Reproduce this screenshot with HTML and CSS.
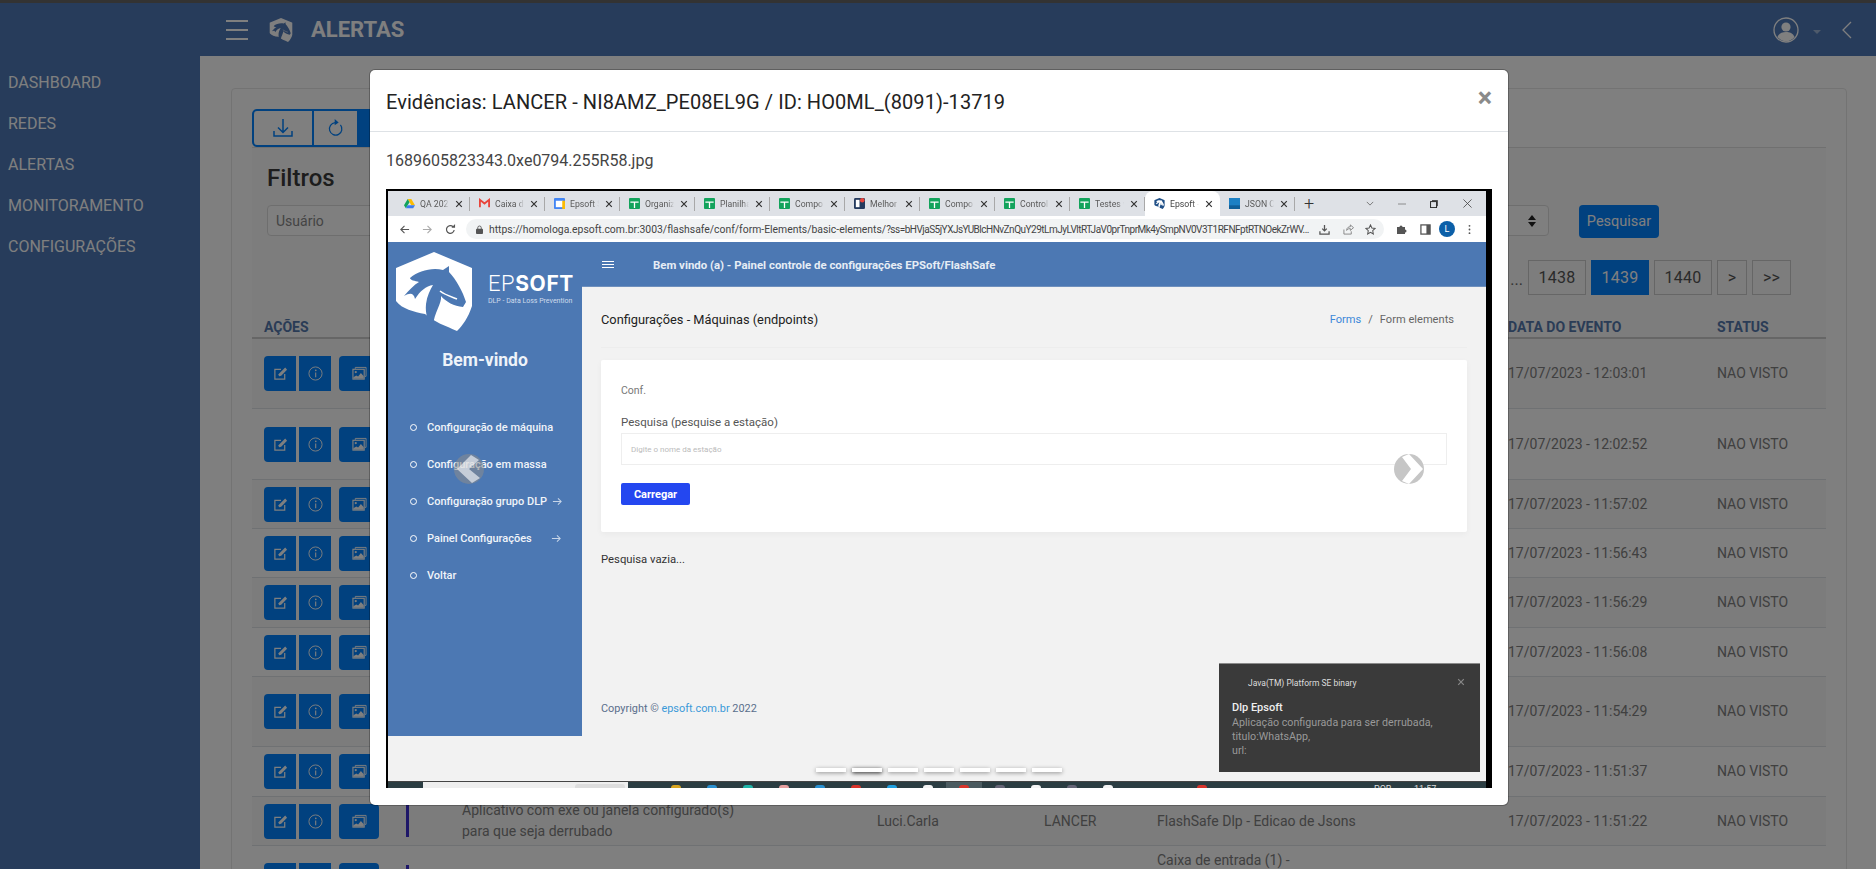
FILE: index.html
```html
<!DOCTYPE html>
<html lang="pt-BR">
<head>
<meta charset="utf-8">
<title>Alertas</title>
<link rel="stylesheet" href="styles.css">
</head>
<body>
<svg class="defs" aria-hidden="true">
  <symbol id="i-edit" viewBox="0 0 16 16"><path d="M12.5 8.5V14H2V3.5h6.5" fill="none" stroke="currentColor" stroke-width="1.3"/><path d="M5.5 9l1.2 2 2-.6L15 4 13 1.5z" fill="currentColor"/></symbol>
  <symbol id="i-info" viewBox="0 0 16 16"><circle cx="8" cy="8" r="7" fill="none" stroke="currentColor" stroke-width="1"/><circle cx="8.3" cy="4.6" r=".9" fill="currentColor"/><path d="M8.2 7v5" stroke="currentColor" stroke-width="1.2" fill="none"/></symbol>
  <symbol id="i-img" viewBox="0 0 16 16"><path d="M3.5 3V1.5H15V11h-1.2" fill="none" stroke="currentColor" stroke-width="1"/><rect x="1" y="3.5" width="12" height="10.5" fill="none" stroke="currentColor" stroke-width="1.2"/><circle cx="4" cy="6.5" r="1.2" fill="currentColor"/><path d="M1.5 13.5V12l3-2 2 1.2L9.5 7.5l3 3.5v2.5z" fill="currentColor"/></symbol>
  <symbol id="i-sheet" viewBox="0 0 12 12"><rect width="12" height="12" rx="1" fill="#12a35c"/><path d="M1.5 4.5h9M6 4.5V11" stroke="#fff" stroke-width="1.4" fill="none"/></symbol>
  <symbol id="i-close" viewBox="0 0 10 10"><path d="M1.5 1.5l7 7M8.5 1.5l-7 7" stroke="currentColor" stroke-width="1.5" fill="none"/></symbol>
  <symbol id="i-horse" viewBox="0 0 76 79">
    <path d="M38 0L76 16V54C72 66 67 73 61 79C50 74 38 70 29 62C18 60 6 57 0 49V16Z" fill="currentColor"/>
    <path d="M14 26C22 19 36 15 47 18L53 14L53 20C60 27 67 40 70 50L67 55C58 54 50 50 45 44C46 52 38 60 37 74C32 71 29 62 30 52C31 44 34 38 37 33C30 34 24 39 19 47C18 42 15 40 8 44C13 38 18 33 23 30C19 29 14 28 14 26Z" fill="var(--horse-fill)"/>
    <path d="M44 39C49 43 56 45 61 47" fill="none" stroke="currentColor" stroke-width="1.6"/>
  </symbol>
  <symbol id="i-arrow" viewBox="0 0 12 12"><path d="M1 6h9M6.5 2.5L10 6 6.5 9.5" fill="none" stroke="currentColor" stroke-width="1.1"/></symbol>
</svg>

<div class="strip"></div>
<header class="topbar">
  <span class="burger"><i></i><i></i><i></i></span>
  <svg class="brand" viewBox="0 0 76 79"><use href="#i-horse"/></svg>
  <h1 class="page-title">ALERTAS</h1>
  <div class="top-right">
    <svg class="user" viewBox="0 0 26 26"><circle cx="13" cy="13" r="12" fill="none" stroke="currentColor" stroke-width="1.3"/><circle cx="13" cy="10" r="4.6" fill="currentColor"/><path d="M4.5 20c1.5-4 5-5 8.500-5s7 1 8.500 5c-2 2.500-5 4.300-8.500 4.300S6.500 22.500 4.500 20z" fill="currentColor"/></svg>
    <span class="caret"></span>
    <svg class="back" viewBox="0 0 10 18"><path d="M9 1L1 9l8 8" fill="none" stroke="currentColor" stroke-width="1.300"/></svg>
  </div>
</header>

<div class="layout">
  <nav class="side">
    <a>DASHBOARD</a><a>REDES</a><a>ALERTAS</a><a>MONITORAMENTO</a><a>CONFIGURAÇÕES</a>
  </nav>
  <main class="content">
    <section class="card">
      <div class="tools">
        <button class="tool t-down"><svg viewBox="0 0 22 22"><path d="M11 2v13M6 10.500l5 5 5-5M2 14v5h18v-5" fill="none" stroke="currentColor" stroke-width="1.500"/></svg></button>
        <button class="tool t-ref"><svg viewBox="0 0 18 22"><path d="M8 5A7 7 0 1 0 14 7.500" fill="none" stroke="currentColor" stroke-width="1.400"/><path d="M7.500 1l4.500 3.800-4.500 3.200z" fill="currentColor"/></svg></button>
        <button class="tool t-fill"></button>
      </div>
      <div class="panel">
        <h2 class="filters-title">Filtros</h2>
        <div class="filter-row">
          <div class="fields"><span class="ph">Usuário</span><span class="updown"><i></i><i></i></span></div>
          <button class="search">Pesquisar</button>
        </div>
        <div class="pager">
          <span class="dots">...</span>
          <a class="pg w58">1438</a><a class="pg w58 on">1439</a><a class="pg w58">1440</a><a class="pg w30">&gt;</a><a class="pg w39">&gt;&gt;</a>
        </div>
      </div>
      <div class="grid head">
        <div class="cell-first">AÇÕES</div><div></div><div></div><div></div><div></div><div></div><div>DATA DO EVENTO</div><div>STATUS</div>
      </div>

      <div class="grid row h70">
        <div class="acts"><button class="a a-l"><svg><use href="#i-edit"/></svg></button><button class="a"><svg><use href="#i-info"/></svg></button><button class="a a-p"><svg><use href="#i-img"/></svg></button></div><div></div><div></div><div></div><div></div><div></div><div>17/07/2023 - 12:03:01</div><div>NAO VISTO</div>
      </div>
      <div class="grid row h71">
        <div class="acts"><button class="a a-l"><svg><use href="#i-edit"/></svg></button><button class="a"><svg><use href="#i-info"/></svg></button><button class="a a-p"><svg><use href="#i-img"/></svg></button></div><div></div><div></div><div></div><div></div><div></div><div>17/07/2023 - 12:02:52</div><div>NAO VISTO</div>
      </div>
      <div class="grid row h49">
        <div class="acts"><button class="a a-l"><svg><use href="#i-edit"/></svg></button><button class="a"><svg><use href="#i-info"/></svg></button><button class="a a-p"><svg><use href="#i-img"/></svg></button></div><div></div><div></div><div></div><div></div><div></div><div>17/07/2023 - 11:57:02</div><div>NAO VISTO</div>
      </div>
      <div class="grid row h49">
        <div class="acts"><button class="a a-l"><svg><use href="#i-edit"/></svg></button><button class="a"><svg><use href="#i-info"/></svg></button><button class="a a-p"><svg><use href="#i-img"/></svg></button></div><div></div><div></div><div></div><div></div><div></div><div>17/07/2023 - 11:56:43</div><div>NAO VISTO</div>
      </div>
      <div class="grid row h50">
        <div class="acts"><button class="a a-l"><svg><use href="#i-edit"/></svg></button><button class="a"><svg><use href="#i-info"/></svg></button><button class="a a-p"><svg><use href="#i-img"/></svg></button></div><div></div><div></div><div></div><div></div><div></div><div>17/07/2023 - 11:56:29</div><div>NAO VISTO</div>
      </div>
      <div class="grid row h49">
        <div class="acts"><button class="a a-l"><svg><use href="#i-edit"/></svg></button><button class="a"><svg><use href="#i-info"/></svg></button><button class="a a-p"><svg><use href="#i-img"/></svg></button></div><div></div><div></div><div></div><div></div><div></div><div>17/07/2023 - 11:56:08</div><div>NAO VISTO</div>
      </div>
      <div class="grid row h70">
        <div class="acts"><button class="a a-l"><svg><use href="#i-edit"/></svg></button><button class="a"><svg><use href="#i-info"/></svg></button><button class="a a-p"><svg><use href="#i-img"/></svg></button></div><div></div><div></div><div></div><div></div><div></div><div>17/07/2023 - 11:54:29</div><div>NAO VISTO</div>
      </div>
      <div class="grid row h50">
        <div class="acts"><button class="a a-l"><svg><use href="#i-edit"/></svg></button><button class="a"><svg><use href="#i-info"/></svg></button><button class="a a-p"><svg><use href="#i-img"/></svg></button></div><div></div><div></div><div></div><div></div><div></div><div>17/07/2023 - 11:51:37</div><div>NAO VISTO</div>
      </div>
      <div class="grid row h49">
        <div class="acts"><button class="a a-l"><svg><use href="#i-edit"/></svg></button><button class="a"><svg><use href="#i-info"/></svg></button><button class="a a-p"><svg><use href="#i-img"/></svg></button></div><div><span class="bar"></span></div><div class="msg">Aplicativo com exe ou janela configurado(s)<br>para que seja derrubado</div><div>Luci.Carla</div><div>LANCER</div><div>FlashSafe Dlp - Edicao de Jsons</div><div>17/07/2023 - 11:51:22</div><div>NAO VISTO</div>
      </div>
      <div class="grid row h70">
        <div class="acts"><button class="a a-l"><svg><use href="#i-edit"/></svg></button><button class="a"><svg><use href="#i-info"/></svg></button><button class="a a-p"><svg><use href="#i-img"/></svg></button></div><div><span class="bar"></span></div><div></div><div></div><div></div><div class="msg-top">Caixa de entrada (1) -</div><div></div><div></div>
      </div>
    </section>
  </main>
</div>

<div class="backdrop"></div>

<div class="modal">
  <div class="modal-head">
    <h3 class="modal-title">Evidências: LANCER - NI8AMZ_PE08EL9G / ID: HO0ML_(8091)-13719</h3>
    <span class="modal-x">×</span>
  </div>
  <div class="modal-body">
    <p class="filename">1689605823343.0xe0794.255R58.jpg</p>
    <div class="frame">
      <div class="shot">
        <div class="tabs">
          <div class="tab"><svg class="fav" viewBox="0 0 12 12"><path d="M4 1h4l4 7H8z" fill="#fbbc04"/><path d="M4 1L0 8l2 3.300L6 4.500z" fill="#12a35c"/><path d="M2 11.300h8L12 8H4z" fill="#3b7df0"/></svg><span class="tt">QA 2023</span><svg class="tx"><use href="#i-close"/></svg></div>
          <div class="tab"><svg class="fav" viewBox="0 0 12 12"><path d="M1 10V2l5 4 5-4v8" fill="none" stroke="#e8453c" stroke-width="2"/></svg><span class="tt">Caixa de</span><svg class="tx"><use href="#i-close"/></svg></div>
          <div class="tab"><svg class="fav" viewBox="0 0 12 12"><rect width="12" height="12" rx="1" fill="#4285f4"/><rect x="2" y="3" width="8" height="7" fill="#fff"/><rect x="9" y="3" width="3" height="9" fill="#fbbc04"/></svg><span class="tt">Epsoft S</span><svg class="tx"><use href="#i-close"/></svg></div>
          <div class="tab"><svg class="fav"><use href="#i-sheet"/></svg><span class="tt">Organiz</span><svg class="tx"><use href="#i-close"/></svg></div>
          <div class="tab"><svg class="fav"><use href="#i-sheet"/></svg><span class="tt">Planilha</span><svg class="tx"><use href="#i-close"/></svg></div>
          <div class="tab"><svg class="fav"><use href="#i-sheet"/></svg><span class="tt">Compo</span><svg class="tx"><use href="#i-close"/></svg></div>
          <div class="tab"><svg class="fav" viewBox="0 0 12 12"><rect width="12" height="12" rx="1.500" fill="#243a5e"/><rect x="2" y="2" width="4" height="8" fill="#fff"/><circle cx="9" cy="2.500" r="2.500" fill="#e8453c"/></svg><span class="tt">Melhor</span><svg class="tx"><use href="#i-close"/></svg></div>
          <div class="tab"><svg class="fav"><use href="#i-sheet"/></svg><span class="tt">Compo</span><svg class="tx"><use href="#i-close"/></svg></div>
          <div class="tab"><svg class="fav"><use href="#i-sheet"/></svg><span class="tt">Control</span><svg class="tx"><use href="#i-close"/></svg></div>
          <div class="tab"><svg class="fav"><use href="#i-sheet"/></svg><span class="tt">Testes v</span><svg class="tx"><use href="#i-close"/></svg></div>
          <div class="tab active"><svg class="fav horse-fav" viewBox="0 0 76 79"><use href="#i-horse"/></svg><span class="tt">Epsoft -</span><svg class="tx"><use href="#i-close"/></svg></div>
          <div class="tab"><svg class="fav" viewBox="0 0 12 12"><rect width="12" height="12" fill="#1c80c4"/><rect y="8" width="12" height="4" fill="#0f5f99"/></svg><span class="tt">JSON C</span><svg class="tx"><use href="#i-close"/></svg></div>
          <span class="plus">+</span>
          <div class="win">
            <svg class="w-chev" viewBox="0 0 10 6"><path d="M1 1l4 4 4-4" fill="none" stroke="#555" stroke-width=".9"/></svg>
            <svg class="w-min" viewBox="0 0 10 10"><path d="M0 5h10" stroke="#777" stroke-width="1"/></svg>
            <svg class="w-max" viewBox="0 0 10 10"><rect x=".7" y="2" width="7.500" height="7.500" fill="none" stroke="#222" stroke-width="1.200"/><path d="M2.500 .7h7v7" fill="none" stroke="#222" stroke-width="1"/></svg>
            <svg class="w-cls" viewBox="0 0 10 10"><path d="M.5 .5l9 9M9.500 .5l-9 9" stroke="#444" stroke-width=".9"/></svg>
          </div>
        </div>
        <div class="addr">
          <svg class="nav-i n-back" viewBox="0 0 12 12"><path d="M11 6H2M6 2L2 6l4 4" fill="none" stroke="#555" stroke-width="1.200"/></svg>
          <svg class="nav-i n-fwd" viewBox="0 0 12 12"><path d="M1 6h9M6 2l4 4-4 4" fill="none" stroke="#aaa" stroke-width="1.200"/></svg>
          <svg class="nav-i n-rel" viewBox="0 0 12 12"><path d="M10 6.500A4.200 4.200 0 1 1 8.800 3" fill="none" stroke="#555" stroke-width="1.300"/><path d="M7 4h4V0z" fill="#555"/></svg>
          <div class="omni">
            <svg class="lock" viewBox="0 0 8 10"><path d="M2 4.500V3a2 2 0 0 1 4 0v1.500" fill="none" stroke="#555"/><rect y="4" width="8" height="6" rx="1" fill="#555"/></svg>
            <span class="url">https://homologa.epsoft.com.br:3003/flashsafe/conf/form-Elements/basic-elements/<span class="url-q">?ss=bHVjaS5jYXJsYUBlcHNvZnQuY29tLmJyLVltRTJaV0prTnprMk4ySmpNV0V3T1RFNFptRTNOekZrWV...</span></span>
            <svg class="o-i o-down" viewBox="0 0 12 12"><path d="M6 1v6M3.500 5L6 7.500 8.500 5" fill="none" stroke="#555" stroke-width="1.400"/><path d="M1 8v3h10V8" fill="none" stroke="#555" stroke-width="1.400"/></svg>
            <svg class="o-i o-share" viewBox="0 0 12 12"><path d="M1 6v5h8V8M4 7c0-3 2-4 4-4V1l3.500 3L8 7V5C6 5 5 5.500 4 7z" fill="none" stroke="#777" stroke-width=".9"/></svg>
            <svg class="o-i o-star" viewBox="0 0 12 12"><path d="M6 1l1.500 3.400 3.500.4-2.600 2.400.7 3.600L6 9l-3.100 1.800.7-3.600L1 4.800l3.500-.4z" fill="none" stroke="#555" stroke-width="1.100"/></svg>
          </div>
          <svg class="o-i t-puzzle" viewBox="0 0 12 12"><path d="M1 4h2.500a1.500 1.500 0 0 1 3 0H9v2.500a1.500 1.500 0 0 1 0 3V11H1z" fill="#555"/></svg>
          <svg class="o-i t-panel" viewBox="0 0 12 12"><rect x="1" y="1" width="10" height="10" fill="none" stroke="#555" stroke-width="1.400"/><rect x="7" y="1" width="4" height="10" fill="#555"/></svg>
          <span class="avatar">L</span>
          <svg class="t-more" viewBox="0 0 3 12"><circle cx="1.500" cy="2" r="1" fill="#555"/><circle cx="1.500" cy="6" r="1" fill="#555"/><circle cx="1.500" cy="10" r="1" fill="#555"/></svg>
        </div>
        <div class="site">
          <aside class="site-side">
            <div class="site-logo">
              <svg class="shield" viewBox="0 0 76 79"><use href="#i-horse"/></svg>
              <div class="wordmark"><div class="ep">EP<b>SOFT</b></div><div class="tag">DLP - Data Loss Prevention</div></div>
            </div>
            <div class="welcome">Bem-vindo</div>
            <ul class="site-menu">
              <li><i></i>Configuração de máquina</li>
              <li><i></i>Configuração em massa</li>
              <li><i></i>Configuração grupo DLP<svg class="m-arr g1"><use href="#i-arrow"/></svg></li>
              <li><i></i>Painel Configurações<svg class="m-arr g2"><use href="#i-arrow"/></svg></li>
              <li><i></i>Voltar</li>
            </ul>
          </aside>
          <div class="site-main">
            <div class="site-nav">
              <span class="site-burger"><i></i><i></i><i></i></span>
              <span class="site-navtitle">Bem vindo (a) - Painel controle de configurações EPSoft/FlashSafe</span>
            </div>
            <div class="site-page">
              <div class="crumbs-row">
                <span class="page-h">Configurações - Máquinas (endpoints)</span>
                <span class="crumbs"><a>Forms</a><em>/</em>Form elements</span>
              </div>
              <div class="conf-card">
                <div class="conf-t">Conf.</div>
                <label class="conf-l">Pesquisa (pesquise a estação)</label>
                <div class="conf-i">Digite o nome da estação</div>
                <button class="conf-b">Carregar</button>
              </div>
              <div class="empty">Pesquisa vazia...</div>
              <div class="copy">Copyright © <a>epsoft.com.br</a> 2022</div>
            </div>
          </div>
        </div>
        <div class="taskbar">
          <span class="tb-search"><span class="tb-pill"></span></span>
          <div class="tb-icons">
            <span class="ti"><i class="c1"></i></span><span class="ti"><i class="c2"></i></span><span class="ti"><i class="c3"></i></span><span class="ti"><i class="c4"></i></span><span class="ti"><i class="c2"></i></span><span class="ti"><i class="c5"></i></span><span class="ti"><i class="c6"></i></span><span class="ti"><i class="c7"></i></span><span class="ti hi"><i class="c5"></i></span><span class="ti"><i class="c8"></i></span><span class="ti"><i class="c7"></i></span><span class="ti"><i class="c8"></i></span><span class="ti"><i class="c7"></i></span>
          </div>
          <i class="tb-red"></i>
          <span class="tb-txt t-por">POR</span><span class="tb-txt t-time">11:57</span>
        </div>

        <svg class="ctrl c-prev" viewBox="0 0 30 30"><circle cx="15" cy="15" r="15" fill="#8c8c8c" fill-opacity=".55"/><path d="M3 15L17 1l8 5-10 9 11 9-8 5z" fill="#fff" fill-opacity=".6"/></svg>
        <svg class="ctrl c-next" viewBox="0 0 30 30"><circle cx="15" cy="15" r="15" fill="#c6c6c6"/><path d="M8 3l7-3 14 15-14 15-7-3 9-12z" fill="#fff"/></svg>
        <div class="dotsbar"><i></i><i class="on"></i><i></i><i></i><i></i><i></i><i></i></div>
        <div class="toast">
          <div class="toast-top">Java(TM) Platform SE binary<svg class="toast-x"><use href="#i-close"/></svg></div>
          <div class="toast-h">Dlp Epsoft</div>
          <div class="toast-b">Aplicação configurada para ser derrubada,<br>titulo:WhatsApp,<br>url:</div>
        </div>
      </div>
    </div>
  </div>
</div>
</body>
</html>
```
FILE: styles.css
```css
*{box-sizing:border-box}
html,body{margin:0;height:869px;overflow:hidden}
body{font-family:Roboto,"Liberation Sans",sans-serif;background:#fff;color:#808080;position:relative;--horse-fill:#4e78b6}
.defs{position:absolute;width:0;height:0}
button{font-family:inherit;border:0;padding:0}
h1,h2,h3,p,ul{margin:0;padding:0}
.strip{height:3px;background:#666}
.topbar{height:53px;background:#4e78b6;display:flex;align-items:center;padding-left:226px;color:#fff}
.burger{width:22px;display:flex;flex-direction:column;gap:7px}
.burger i{display:block;height:2px;background:#fff}
.brand{width:24px;height:24px;margin-left:21px;color:#fff;--horse-fill:#4e78b6}
.page-title{font-size:22px;font-weight:700;margin-left:18px;line-height:1}
.top-right{margin-left:auto;display:flex;align-items:center;padding-right:24px}
.user{width:26px;height:26px}
.caret{margin-left:14px;margin-top:4px;border:4px solid transparent;border-top:4px solid rgba(255,255,255,.45);border-bottom-width:0}
.back{width:10px;height:18px;margin-left:21px}
.layout{display:flex;height:813px}
.side{width:200px;background:#4e78b6;padding-top:6px;flex:none}
.side a{display:block;height:41px;line-height:41px;padding-left:8px;color:#fff;font-size:16px}
.content{flex:1;padding:32px 29px 0 31px;overflow:hidden}
.card{border:1px solid #e6e6e6;border-radius:4px;padding:20px 20px 0;height:900px}
.tools{display:flex;height:38px}
.tool{height:38px;background:#fff;border:2px solid #0282fe;color:#0282fe;display:flex;align-items:center;justify-content:center}
.t-down{width:62px;border-radius:5px 0 0 5px}
.t-ref{width:45px;border-left:0}
.t-fill{flex:0 0 60px;background:#0282fe}
.t-down svg{width:22px;height:22px}
.t-ref svg{width:16px;height:20px}
.panel{border-top:1px solid #e0e0e0;background:#fafafa;height:169px;padding:9px 35px 0 15px}
.filters-title{font-size:24px;font-weight:500;line-height:42px;color:#3a3a3a;height:42px}
.filter-row{display:flex;margin-top:6px;height:33px;padding-right:132px}
.fields{flex:1;height:31px;border:1px solid #ddd;border-radius:4px;margin-right:30px;background:#fff;display:flex;align-items:center;justify-content:space-between;padding:0 12px 0 8px}
.ph{font-size:14px;color:#888}
.updown{display:flex;flex-direction:column;gap:2px}
.updown i{display:block;border:4px solid transparent}
.updown i:first-child{border-bottom:5px solid #222;border-top-width:0}
.updown i:last-child{border-top:5px solid #222;border-bottom-width:0}
.search{width:80px;height:33px;border-radius:4px;background:#0282fe;color:#fff;font-size:14.500px}
.pager{display:flex;justify-content:flex-end;gap:5px;margin-top:22px;height:35px;align-items:stretch}
.dots{font-size:16px;color:#666;align-self:center;padding-top:4px}
.pg{border:1px solid #ccc;display:flex;align-items:center;justify-content:center;color:#555;font-size:16px;letter-spacing:.2px}
.w58{width:58px}.w30{width:30px}.w39{width:39px}
.pg.on{background:#0282fe;color:#fff;border-color:#0282fe}
.grid{display:grid;grid-template-columns:155px 55px 415px 167px 113px 351px 209px 109px;align-items:center;font-size:14px;color:#808080}
.head{height:23px;border-bottom:2px solid #ccc;font-weight:700;color:#5578ad;font-size:14px;background:#fafafa}
.cell-first{padding-left:12px}
.row{border-bottom:1px solid #dee2e6;line-height:21px}
.row:nth-of-type(even){background:#f8f8f8}
.h49{height:49px}.h50{height:50px}.h70{height:70px}.h71{height:71px}
.acts{display:flex;padding-left:12px}
.a{width:32px;height:35px;background:#0282fe;color:#fff;display:flex;align-items:center;justify-content:center;margin-right:3px}
.a svg{width:15px;height:15px}
.a-l{border-radius:4px 0 0 4px}
.a-p{width:40px;border-radius:4px;margin-left:5px}
.bar{display:block;width:3px;height:32px;background:#3d2fd0;margin-left:-1px}
.msg{color:#808080}
.msg-top{align-self:start;margin-top:4px}

.backdrop{position:absolute;inset:0;background:rgba(0,0,0,.5)}
.modal{position:absolute;left:370px;top:70px;width:1138px;height:735px;background:#fff;border-radius:5px;color:#212529;box-shadow:0 0 0 1px rgba(0,0,0,.25)}
.modal-head{height:62px;border-bottom:1px solid #dee2e6;display:flex;align-items:center;justify-content:space-between;padding:2px 16px 0 16px}
.modal-title{font-size:20px;font-weight:400;letter-spacing:.07px;color:#222}
.modal-x{font-size:27px;font-weight:700;color:#8a8a8a;line-height:1;margin-top:-6px}
.modal-body{padding:0 16px 17px}
.filename{font-size:16px;line-height:20px;padding:19px 0 0;color:#444;height:57px}
.frame{height:599px;background:#000;padding:2px 6px 0 2px;overflow:hidden}
.shot{position:relative;height:597px;display:flex;flex-direction:column;overflow:hidden;background:#f2f2f2;font-size:11px;color:#333}

.tabs{height:25px;background:#dee1e6;display:flex;align-items:center;padding-left:7px;flex:none}
.tab{width:75px;height:25px;display:flex;align-items:center;padding-left:9px;position:relative;font-size:8.700px;color:#5a5a5a}
.tab::after{content:"";position:absolute;right:0;top:6px;height:14px;width:1px;background:#a8a8a8}
.tab.active{background:#fff;border-radius:8px 8px 0 0;color:#444}
.tab.active::after{display:none}
.fav{width:11px;height:11px;flex:none}
.horse-fav{color:#1f4f86;--horse-fill:#fff}
.tt{width:29px;margin-left:5px;white-space:nowrap;overflow:hidden;-webkit-mask-image:linear-gradient(90deg,#000 78%,transparent);mask-image:linear-gradient(90deg,#000 78%,transparent)}
.tx{width:8px;height:8px;margin-left:6px;color:#333;flex:none}
.plus{font-size:18px;color:#333;margin-left:9px;line-height:1;font-weight:300}
.win{margin-left:auto;display:flex;align-items:center;height:25px;padding-right:14px}
.w-chev{width:8px;height:5px;margin-right:24px}
.w-min{width:8px;height:8px;margin-right:24px}
.w-max{width:8px;height:8px;margin-right:25px}
.w-cls{width:9px;height:9px}
.addr{height:26px;background:#fff;display:flex;align-items:center;padding-left:11px;flex:none}
.nav-i{width:11px;height:11px;margin-right:12px;flex:none}
.n-rel{margin-right:10px}
.omni{width:918px;height:20px;border-radius:10px;background:#f1f3f4;display:flex;align-items:center;padding-left:10px;flex:none}
.lock{width:7px;height:9px;flex:none}
.url{font-size:10.400px;color:#444;margin-left:6px;width:822px;white-space:nowrap;overflow:hidden;flex:none}
.url-q{font-size:10px;letter-spacing:-.5px}
.o-i{width:11px;height:11px;flex:none}
.o-down{margin-left:8px}
.o-share{margin-left:13px}
.o-star{margin-left:11px}
.t-puzzle{margin-left:12px;width:12px;height:12px}
.t-panel{margin-left:12px}
.avatar{width:16px;height:16px;border-radius:50%;background:#0b5fa8;color:#fff;font-size:9px;display:flex;align-items:center;justify-content:center;margin-left:8px;flex:none}
.t-more{width:3px;height:11px;margin-left:13px;flex:none}

.site{height:539px;display:flex;flex:none}
.site-side{width:194px;height:494px;background:#4c78b3;color:#fff;flex:none;--horse-fill:#4c78b3}
.site-logo{display:flex;padding:10px 0 0 8px;height:90px}
.shield{width:76px;height:79px;color:#fff;flex:none}
.wordmark{margin-left:16px;padding-top:21px}
.ep{font-size:22px;line-height:22px;font-weight:300;letter-spacing:.6px;white-space:nowrap}
.ep b{font-weight:700;font-family:Inter,Roboto,sans-serif;font-size:21px;letter-spacing:.6px}
.tag{font-size:7px;color:#cfdcec;margin-top:2px;white-space:nowrap}
.welcome{font-size:17.500px;font-weight:700;text-align:center;line-height:24px;margin-top:16px;color:#eef3f9}
.site-menu{list-style:none;margin-top:37px;padding-left:22px;font-size:11px;font-weight:500;color:#f0f4f9}
.site-menu li{height:37.100px;display:flex;align-items:center;white-space:nowrap;line-height:1}
.site-menu li i{width:7px;height:7px;border:1.500px solid #fff;border-radius:50%;margin-right:10px;flex:none}
.m-arr{width:11px;height:11px;color:#c7d5e8;flex:none}
.g1{margin-left:5px}
.g2{margin-left:19px}
.site-main{flex:1;display:flex;flex-direction:column;min-width:0}
.site-nav{height:45px;background:#4c78b3;display:flex;align-items:center;color:#fff;padding:1px 0 0 20px;flex:none;border-bottom:1px solid #6f90bd}
.site-burger{width:12px;display:flex;flex-direction:column;gap:2px}
.site-burger i{display:block;height:1.200px;background:#fff}
.site-navtitle{font-size:11.400px;font-weight:700;margin-left:39px;color:#e6edf5}
.site-page{flex:1;padding:0 19px}
.crumbs-row{height:61px;display:flex;justify-content:space-between;align-items:center;border-bottom:1px solid #ededed;padding:5px 13px 0 0;margin-bottom:12px}
.page-h{font-size:12.800px;color:#222}
.crumbs{font-size:11.100px;color:#666}
.crumbs a{color:#3b88d9}
.crumbs em{font-style:normal;margin:0 7px}
.conf-card{height:172px;background:#fff;border-radius:2px;padding:24px 20px;box-shadow:0 2px 6px rgba(0,0,0,.04)}
.conf-t{font-size:10.500px;color:#777;line-height:14px}
.conf-l{display:block;font-size:11.500px;color:#555;margin-top:17px;line-height:14px}
.conf-i{height:32px;border:1px solid #eee;margin-top:4px;font-size:8px;color:#bbb;display:flex;align-items:center;padding-left:9px}
.conf-b{display:block;width:69px;height:22px;background:#2447f0;color:#fff;font-size:11px;font-weight:700;border-radius:2px;margin-top:18px}
.empty{font-size:11.300px;color:#333;margin-top:21px;line-height:14px}
.copy{font-size:10.900px;color:#5a6f8c;margin-top:135px;line-height:14px}
.copy a{color:#3b9ad9}

.taskbar{height:7px;background:#2b3d42;display:flex;flex:none;overflow:hidden;position:relative;padding-left:35px;border-top:1px solid #444}
.tb-search{width:205px;height:7px;background:#eee;padding:2px 3px 0 152px;flex:none}
.tb-pill{display:block;width:50px;height:7px;background:#ddd;border-radius:3px 3px 0 0}
.tb-icons{display:flex;margin-left:30px;flex:none}
.ti{width:36px;height:7px;display:flex;justify-content:center;padding-top:3px;flex:none}
.ti.hi{background:#4b5b60}
.ti i{display:block;width:10px;height:10px;border-radius:3px}
.c1{background:#d9a520}.c2{background:#2a90d0}.c3{background:#20b5a8}.c4{background:#e8a0a0}.c5{background:#d9342b}.c6{background:#20a0e0}.c7{background:#f4f4f4}.c8{background:#667}
.tb-red{display:block;width:10px;height:10px;background:#d9342b;margin:3px 0 0 71px;border-radius:3px;flex:none}
.tb-txt{font-size:9px;color:#ddd;position:absolute;top:2px;line-height:10px}
.t-por{left:986px}
.t-time{left:1026px}

.ctrl{position:absolute;width:30px;height:30px;top:263px}
.c-prev{left:66px}
.c-next{left:1006px}
.dotsbar{position:absolute;left:428px;top:577px;display:flex;gap:6px}
.dotsbar i{display:block;width:30px;height:4px;background:#fff;box-shadow:0 1px 4px rgba(0,0,0,.4)}
.dotsbar i.on{box-shadow:0 1px 4px rgba(0,0,0,.9)}
.toast{position:absolute;left:831px;top:472px;width:261px;height:109px;background:#3a3a3a;border-top:1px solid #8a8a8a;padding:13px 0 0 13px}
.toast-top{font-size:8.500px;color:#ddd;padding-left:16px;line-height:12px;position:relative}
.toast-x{position:absolute;right:15px;top:1px;width:8px;height:8px;color:#888}
.toast-h{font-size:11px;font-weight:500;color:#eee;margin-top:12px;line-height:14px}
.toast-b{font-size:10.700px;color:#999;line-height:14px;margin-top:1px}
```
